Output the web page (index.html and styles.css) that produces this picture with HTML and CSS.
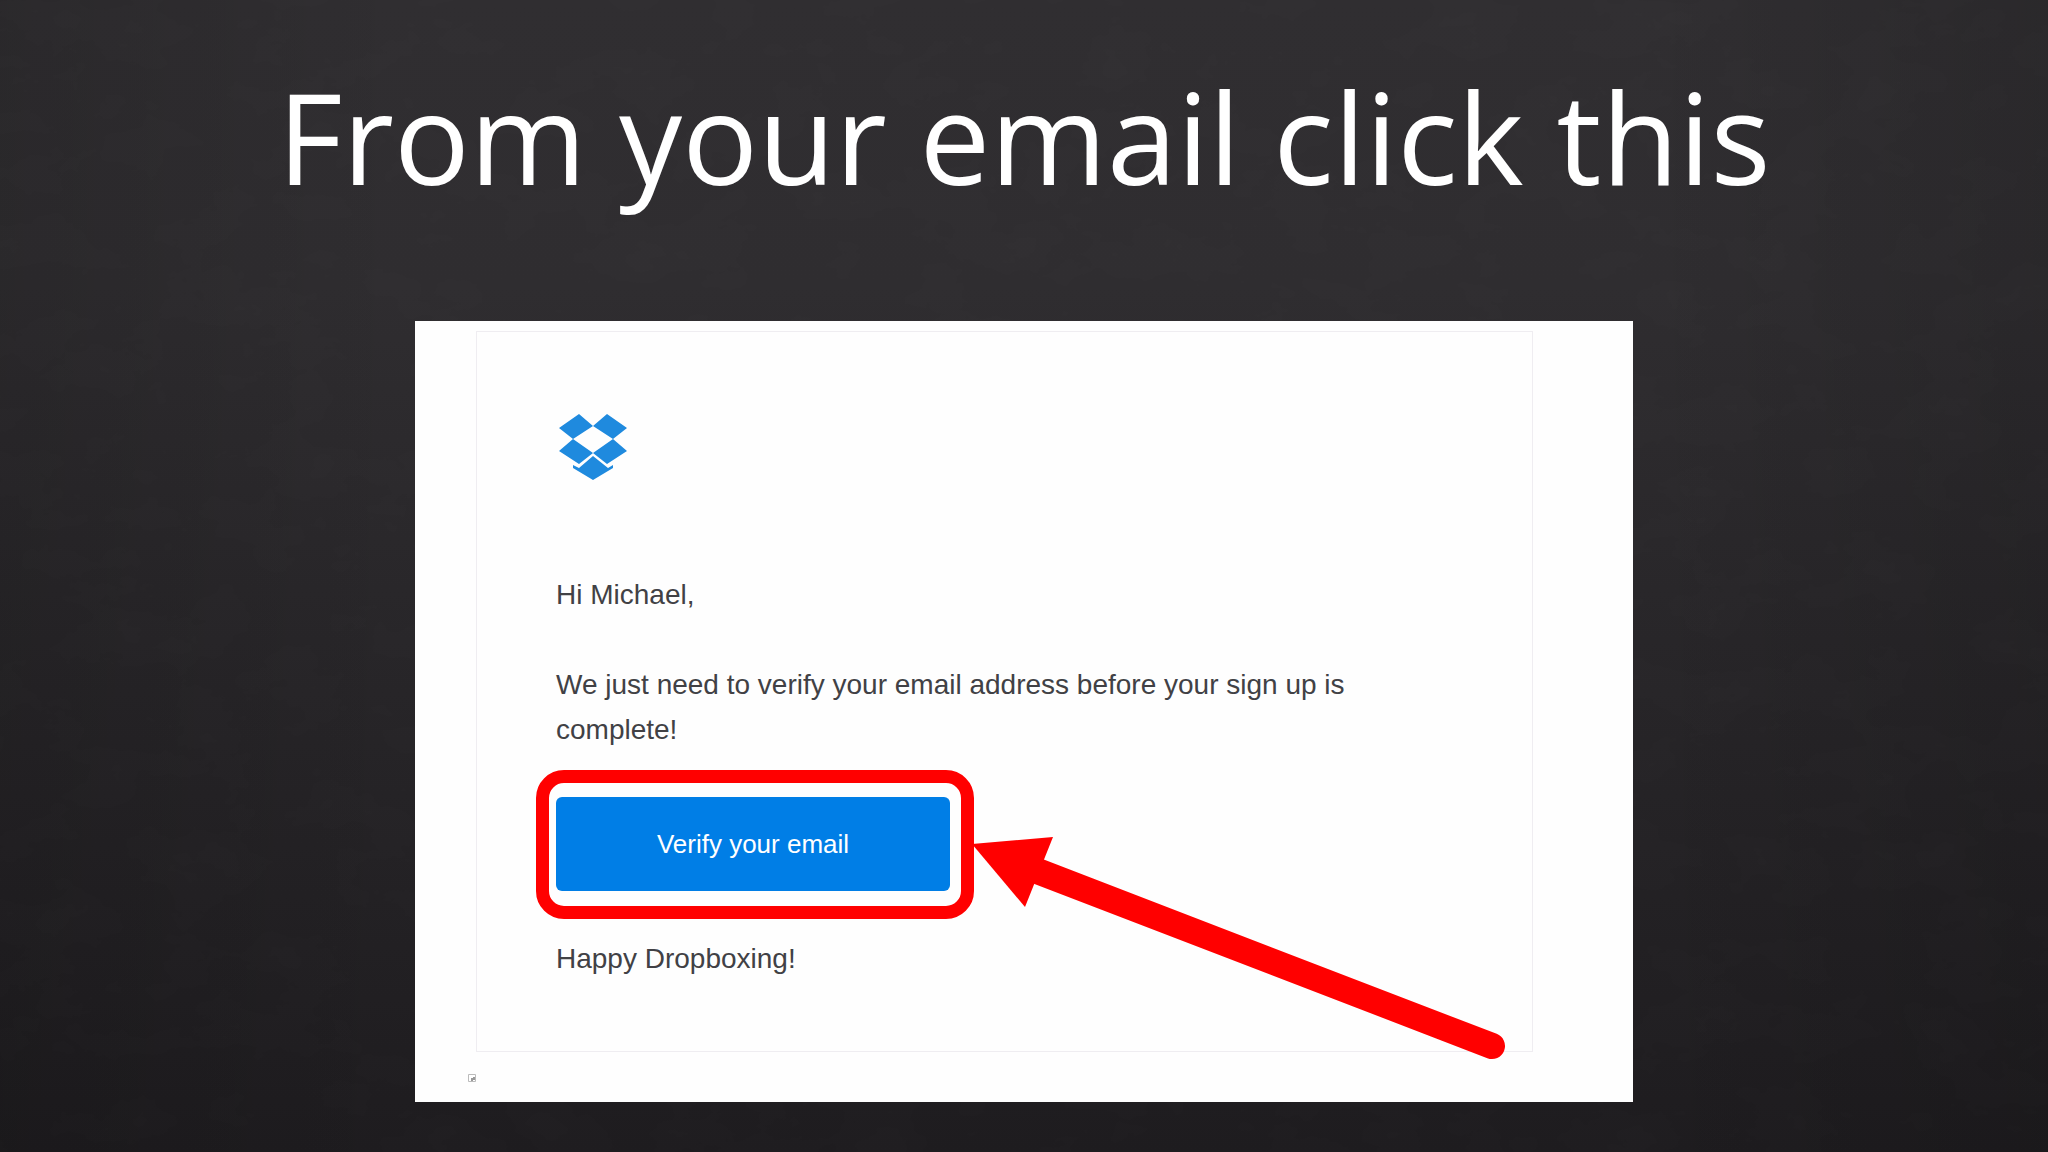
FILE: index.html
```html
<!DOCTYPE html>
<html lang="en">
<head>
<meta charset="utf-8">
<meta name="viewport" content="width=device-width, initial-scale=1">
<title>From your email click this</title>
<link rel="stylesheet" href="styles.css">
</head>
<body>
<svg class="texture" aria-hidden="true">
  <filter id="slate" x="0" y="0" width="100%" height="100%">
    <feTurbulence type="fractalNoise" baseFrequency="0.012 0.018" numOctaves="5" seed="8"/>
    <feColorMatrix values="0 0 0 0 1  0 0 0 0 1  0 0 0 0 1  0.9 0 0 0 -0.3"/>
  </filter>
  <rect width="100%" height="100%" filter="url(#slate)"/>
</svg>
<main class="slide">
  <h1 class="title">From your email click this</h1>
  <section class="card">
    <article class="message">
      <svg class="logo" viewBox="0 0 68 66" role="img" aria-label="Dropbox">
        <path d="M20 0 34 12 14 25 0 14zM48 0 68 14 54 25 34 12zM14 25 34 39 20 50 0 37zM54 25 68 37 48 50 34 39z"/>
        <path d="M34 42 49 54 54 51V54L34 66 14 54V51L20 54z"/>
      </svg>
      <p>Hi Michael,</p>
      <p>We just need to verify your email address before your sign up is complete!</p>
      <div class="action">
        <button class="verify" type="button">Verify your email</button>
        <svg class="arrow" viewBox="0 0 534 224" aria-hidden="true">
          <path class="shaft" d="M60 33 520 210"/>
          <path d="M0 8 81 1 53 71z"/>
        </svg>
      </div>
      <p>Happy Dropboxing!</p>
    </article>
    <svg class="missing" viewBox="0 0 8 8" aria-hidden="true">
      <path class="missing-frame" d="M.5.5h7v7h-7z"/>
      <path class="missing-mark" d="M3 4h2V3h2v3H5v1H3z"/>
    </svg>
  </section>
</main>
</body>
</html>
```
FILE: styles.css
```css
* { box-sizing: border-box; }

body {
  margin: 0;
  min-height: 100vh;
  position: relative;
  background:
    linear-gradient(90deg, rgba(0, 0, 0, .12), transparent 20%, transparent 80%, rgba(0, 0, 0, .12)),
    linear-gradient(#302e31, #2f2d30 25%, #272528 60%, #1e1c1f);
  font-family: "Liberation Sans", Arial, sans-serif;
}

.texture {
  position: absolute;
  inset: 0;
  width: 100%;
  height: 100%;
  opacity: .02;
}

.slide {
  position: relative;
  display: flex;
  flex-direction: column;
  align-items: center;
  gap: 99px;
  padding: 50px 32px 48px;
}

.title {
  margin: 0;
  color: #fff;
  font: 400 126px/172px "Open Sans", "Noto Sans", sans-serif;
  text-align: center;
}

.card {
  width: 100%;
  max-width: 1218px;
  padding: 10px 100px 20px 53px;
  background: #fefefe;
}

.message {
  display: flex;
  flex-direction: column;
  align-items: flex-start;
  gap: 45px;
  margin-left: 8px;
  padding: 82px 79px 70px;
  border: 1px solid #efedf1;
  color: #414145;
  font-size: 28px;
  line-height: 45px;
}

.message p { margin: 0; }

.logo {
  width: 68px;
  height: 66px;
  margin: 0 3px 47px;
  fill: #1f8ade;
}

.action {
  position: relative;
  width: 394px;
}

.action::before {
  content: "";
  position: absolute;
  inset: -27px -24px -28px -20px;
  border: 13px solid #f00;
  border-radius: 28px;
}

.verify {
  display: block;
  position: relative;
  width: 100%;
  padding: 24px;
  border: 0;
  border-radius: 6px;
  background: #007ee6;
  color: #fff;
  font: 26px/46px "Liberation Sans", Arial, sans-serif;
}

.arrow {
  position: absolute;
  left: 416px;
  top: 39px;
  width: 534px;
  height: 224px;
  fill: #f00;
}

.shaft {
  stroke: #f00;
  stroke-width: 26px;
  stroke-linecap: round;
}

.missing {
  display: block;
  width: 8px;
  height: 8px;
  margin-top: 22px;
}

.missing-frame { fill: #fff; stroke: #bbb; }
.missing-mark { fill: #999; }
```
